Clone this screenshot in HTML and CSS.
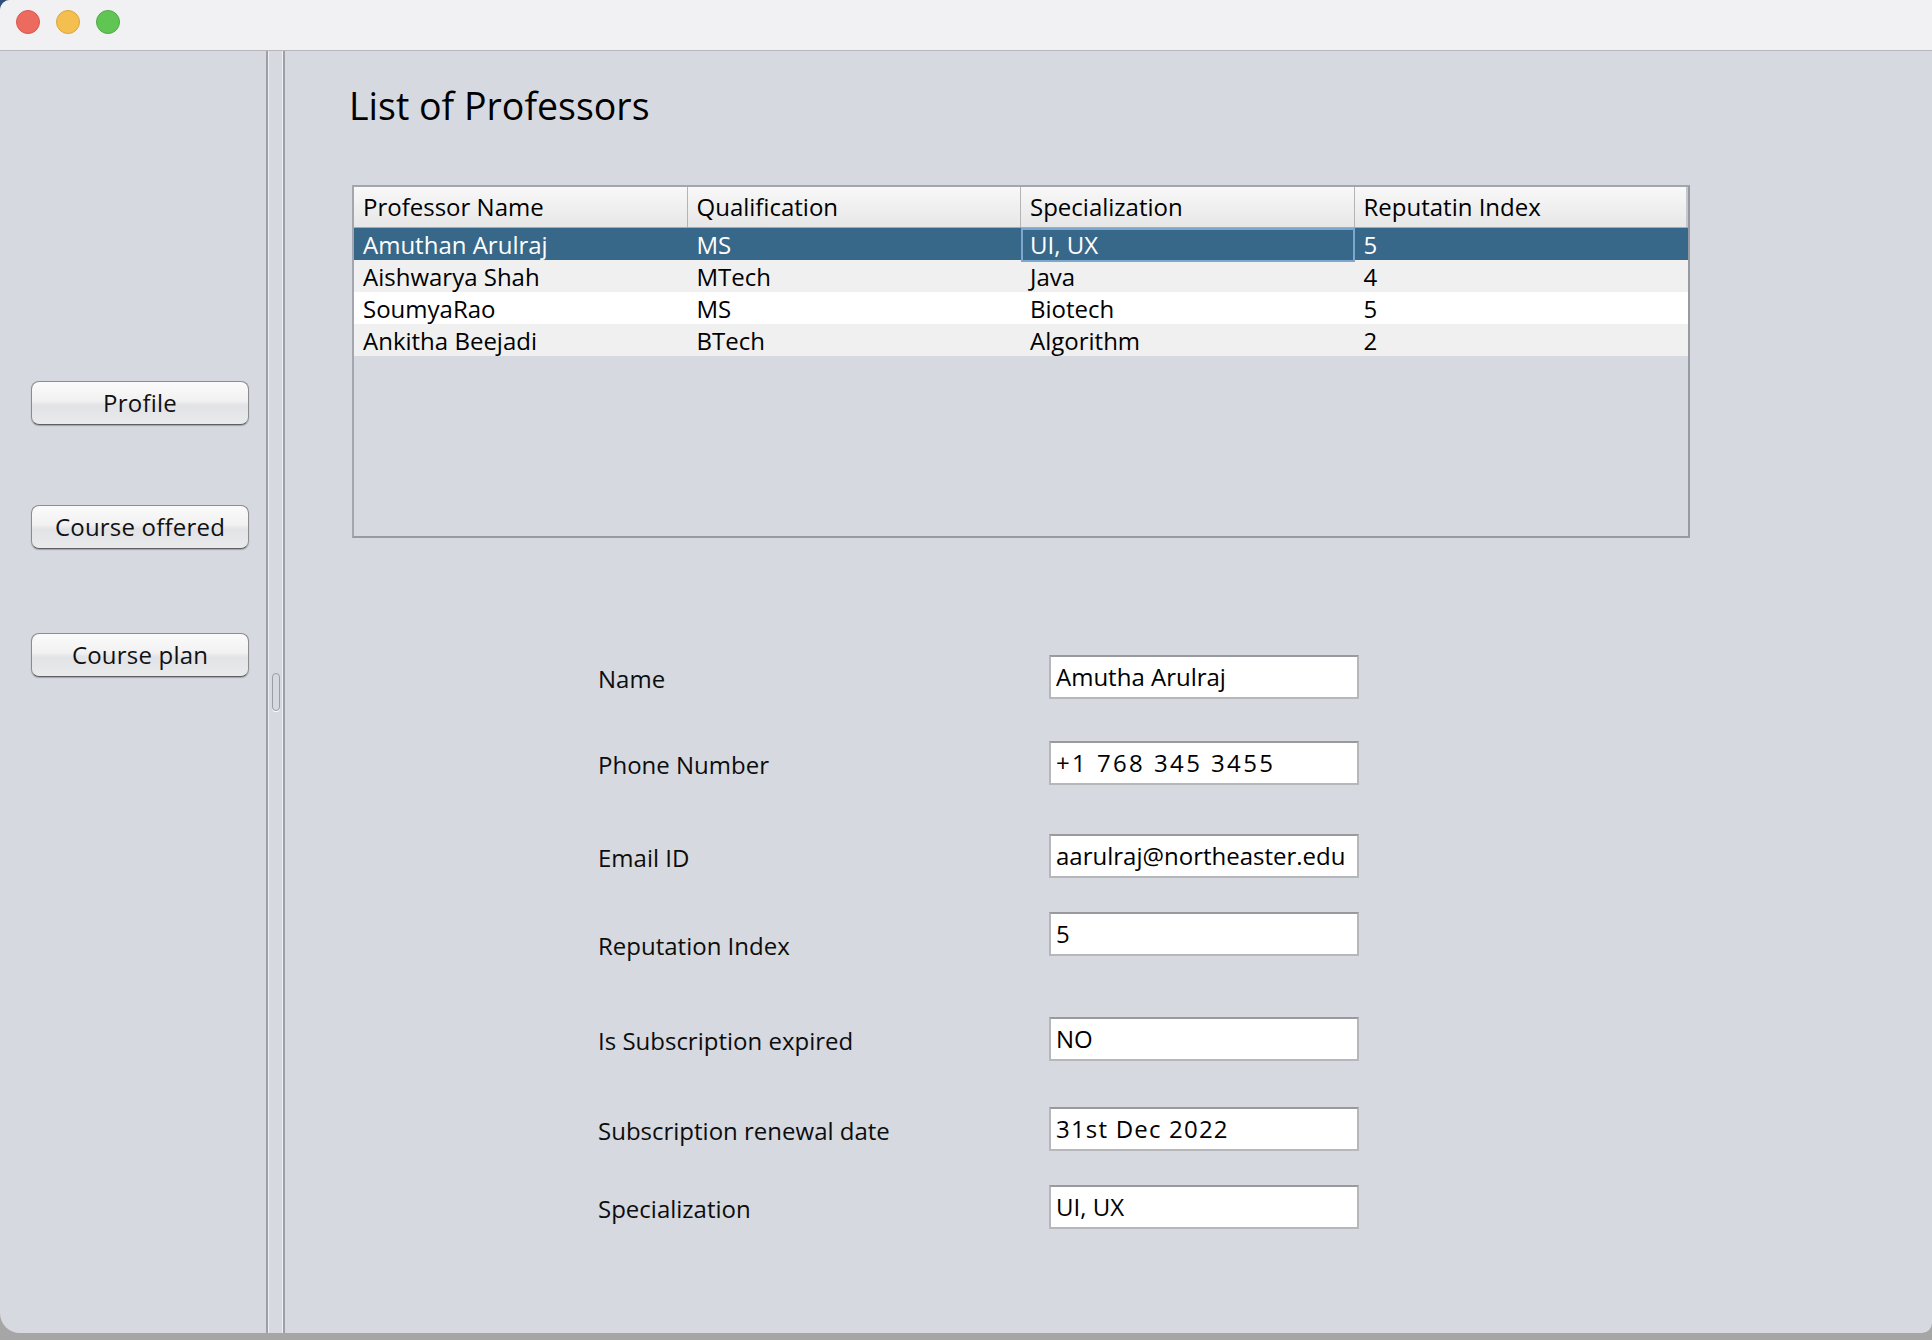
FILE: index.html
```html
<!DOCTYPE html>
<html lang="en">
<head>
<meta charset="utf-8">
<title>List of Professors</title>
<link rel="stylesheet" href="styles.css">
</head>
<body>
<div class="window">
  <div class="titlebar">
    <span class="light red"></span>
    <span class="light yellow"></span>
    <span class="light green"></span>
  </div>
  <div class="main">
    <aside class="sidebar">
      <button class="btn">Profile</button>
      <button class="btn">Course offered</button>
      <button class="btn">Course plan</button>
    </aside>
    <div class="divider"><span class="grip"></span></div>
    <section class="content">
      <h1 class="title">List of Professors</h1>
      <div class="table">
        <div class="thead">
          <div class="th">Professor Name</div>
          <div class="th">Qualification</div>
          <div class="th">Specialization</div>
          <div class="th">Reputatin Index</div>
        </div>
        <div class="row sel">
          <div class="td">Amuthan Arulraj</div>
          <div class="td">MS</div>
          <div class="td focus">UI, UX</div>
          <div class="td">5</div>
        </div>
        <div class="row alt">
          <div class="td">Aishwarya Shah</div>
          <div class="td">MTech</div>
          <div class="td">Java</div>
          <div class="td">4</div>
        </div>
        <div class="row plain">
          <div class="td">SoumyaRao</div>
          <div class="td">MS</div>
          <div class="td">Biotech</div>
          <div class="td">5</div>
        </div>
        <div class="row alt">
          <div class="td">Ankitha Beejadi</div>
          <div class="td">BTech</div>
          <div class="td">Algorithm</div>
          <div class="td">2</div>
        </div>
      </div>
      <div class="form">
        <div class="frow"><span class="flabel">Name</span><div class="field">Amutha Arulraj</div></div>
        <div class="frow"><span class="flabel">Phone Number</span><div class="field phone">+1 768 345 3455</div></div>
        <div class="frow"><span class="flabel">Email ID</span><div class="field">aarulraj@northeaster.edu</div></div>
        <div class="frow"><span class="flabel low">Reputation Index</span><div class="field">5</div></div>
        <div class="frow"><span class="flabel">Is Subscription expired</span><div class="field">NO</div></div>
        <div class="frow"><span class="flabel">Subscription renewal date</span><div class="field date">31st Dec 2022</div></div>
        <div class="frow"><span class="flabel">Specialization</span><div class="field">UI, UX</div></div>
      </div>
    </section>
  </div>
</div>
</body>
</html>
```
FILE: styles.css
```css
html, body {
  margin: 0;
  padding: 0;
  height: 100%;
}

body {
  background: linear-gradient(#2f4f7a 0, #2f4f7a 30px, #a6a6a6 30px);
  font-family: "Open Sans", "Noto Sans", sans-serif;
  color: #000;
  overflow: hidden;
}

.window {
  width: 1932px;
  height: 1333px;
  background: #d6d9df;
  border-radius: 10px 0 10px 20px;
  overflow: hidden;
  display: flex;
  flex-direction: column;
}

.titlebar {
  height: 51px;
  flex: none;
  background: #f1f0f3;
  border-bottom: 1px solid #b6b7bc;
  display: flex;
  align-items: flex-start;
  gap: 16px;
  padding: 10px 0 0 16px;
  box-sizing: border-box;
}

.light {
  width: 24px;
  height: 24px;
  border-radius: 50%;
  box-sizing: border-box;
}
.red { background: #ec6a5e; border: 1px solid #d45a4f; }
.yellow { background: #f5bf4f; border: 1px solid #d9a53e; }
.green { background: #61c554; border: 1px solid #4fa944; }

.main {
  flex: 1;
  display: flex;
  min-height: 0;
}

.sidebar {
  width: 266px;
  flex: none;
  display: flex;
  flex-direction: column;
  align-items: flex-start;
  padding: 330px 0 0 31px;
  box-sizing: border-box;
}

.btn {
  width: 218px;
  height: 44px;
  margin: 0;
  padding: 0;
  border: 1px solid #8c8c8f;
  border-bottom-color: #5f5f63;
  border-radius: 8px;
  background: linear-gradient(#fbfbfb 0%, #f1f1f2 45%, #e2e3e6 55%, #e9eaec 100%);
  box-shadow: 0 1px 1px rgba(0, 0, 0, 0.25);
  font-family: "Open Sans", "Noto Sans", sans-serif;
  font-size: 24px;
  letter-spacing: 0.2px;
  line-height: 40px;
  color: #111;
  text-align: center;
}
.btn + .btn { margin-top: 80px; }
.btn:last-child { margin-top: 84px; }

.divider {
  width: 19px;
  flex: none;
  box-sizing: border-box;
  border-left: 2px solid #9c9fa7;
  border-right: 2px solid #9c9fa7;
  box-shadow: inset 1px 0 #eef0f3, inset -1px 0 #eef0f3;
  display: flex;
  align-items: center;
  justify-content: center;
}

.grip {
  width: 8px;
  height: 38px;
  box-sizing: border-box;
  border: 1px solid #9a9da5;
  border-radius: 5px;
  box-shadow: 0 1px 0 #ffffff;
}

.content {
  flex: 1;
  padding: 33px 0 0 64px;
  box-sizing: border-box;
}

.title {
  margin: 0;
  font-size: 37.5px;
  font-weight: 400;
  line-height: 44px;
}

.table {
  margin: 57px 0 0 3px;
  width: 1338px;
  height: 353px;
  box-sizing: border-box;
  border: 2px solid #979aa3;
  border-top-color: #a3a6ae;
  border-left-color: #a3a6ae;
}

.thead, .row {
  display: grid;
  grid-template-columns: repeat(4, 1fr);
}

.thead {
  height: 41px;
  background: linear-gradient(#f8f8f8, #e7e7e8);
  border-bottom: 1px solid #a8a9ad;
  box-sizing: border-box;
}

.th {
  font-size: 24px;
  line-height: 39px;
  padding-left: 9px;
  border-right: 1px solid #b3b4b8;
  white-space: nowrap;
}
.th:last-child { border-right: 2px solid #c6c7cb; }

.row {
  height: 32px;
}

.td {
  font-size: 24px;
  line-height: 34px;
  padding-left: 9px;
  white-space: nowrap;
}

.sel { background: #386889; color: #fff; }
.sel .focus { box-shadow: inset 0 0 0 2px #7ea7cf; }
.alt { background: #f0f0f0; }
.plain { background: #ffffff; }

.form {
  margin: 117px 0 0 249px;
  display: flex;
  flex-direction: column;
}

.frow {
  display: flex;
  align-items: center;
  height: 44px;
}
.frow:nth-child(2) { margin-top: 42px; }
.frow:nth-child(3) { margin-top: 49px; }
.frow:nth-child(4) { margin-top: 34px; }
.frow:nth-child(5) { margin-top: 61px; }
.frow:nth-child(6) { margin-top: 46px; }
.frow:nth-child(7) { margin-top: 34px; }

.flabel {
  width: 451px;
  flex: none;
  font-size: 24px;
  line-height: 30px;
  padding-top: 3px;
  color: #0d0d0d;
}
.flabel.low { padding-top: 24px; }

.field {
  width: 310px;
  height: 44px;
  box-sizing: border-box;
  background: #fff;
  border: 2px solid #b6b7ba;
  border-top-color: #999a9e;
  padding-left: 5px;
  font-size: 24px;
  line-height: 40px;
  white-space: nowrap;
  overflow: hidden;
}
.field.phone { letter-spacing: 2.4px; }
.field.date { letter-spacing: 1.2px; }
```
